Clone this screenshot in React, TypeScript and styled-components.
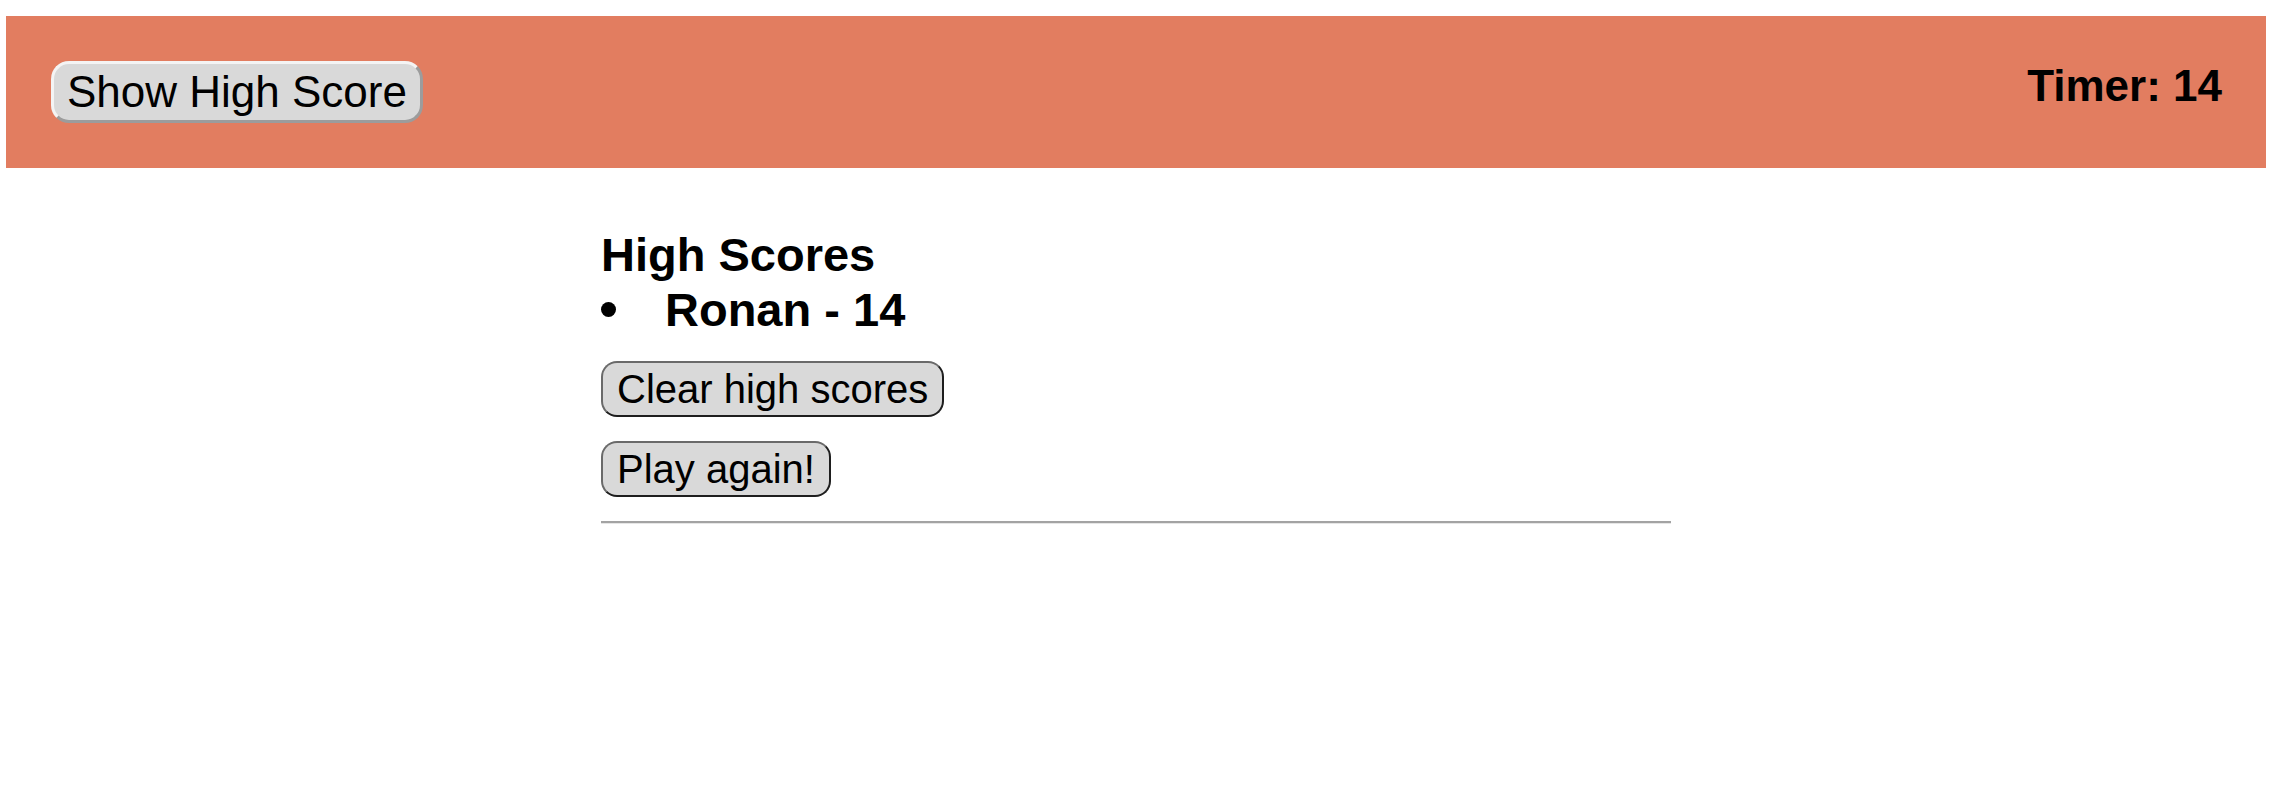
import React from 'react';
import styled, { createGlobalStyle } from 'styled-components';

const GlobalStyle = createGlobalStyle`
  html, body {
    margin: 0;
    padding: 0;
    background: #ffffff;
  }
  body {
    font-family: "Liberation Sans", Arial, sans-serif;
    color: #000000;
  }
`;

const Page = styled.div`
  padding: 16px 14px 0 6px;
`;

const Header = styled.header`
  height: 152px;
  background: #e27d60;
  display: flex;
  align-items: center;
  justify-content: space-between;
  padding: 0 44px 0 45px;
  box-sizing: border-box;
`;

const Timer = styled.h3`
  margin: 0 0 12px 0;
  font-size: 44px;
  font-weight: 700;
  line-height: normal;
`;

const Button = styled.button<{ $variant?: 'header' | 'plain' }>`
  font-family: "Liberation Sans", Arial, sans-serif;
  color: #000000;
  background: #d9d9d9;
  cursor: pointer;
  ${({ $variant }) =>
    $variant === 'header'
      ? `
    font-size: 44px;
    line-height: 50px;
    padding: 3px 13px;
    border-width: 3px;
    border-style: solid;
    border-color: #f4f4f4 #9c9c9c #9c9c9c #f4f4f4;
    border-radius: 18px;
  `
      : `
    align-self: flex-start;
    font-size: 40px;
    line-height: 46px;
    padding: 3px 14px;
    border-width: 2px;
    border-style: solid;
    border-color: #6a6a6a #1e1e1e #1e1e1e #6a6a6a;
    border-radius: 16px;
  `}
`;

const Main = styled.main`
  width: 1070px;
  margin: 59px auto 0;
  display: flex;
  flex-direction: column;
`;

const Title = styled.h2`
  margin: 0;
  font-size: 47px;
  font-weight: 700;
  line-height: normal;
`;

const ScoreList = styled.ul`
  margin: 0 0 24px 0;
  padding: 0;
  list-style: none;
`;

const ScoreItem = styled.li`
  display: flex;
  align-items: center;
  font-size: 47px;
  font-weight: 700;
  line-height: normal;
`;

const Bullet = styled.span`
  width: 15px;
  height: 15px;
  border-radius: 50%;
  background: #000000;
  margin-right: 49px;
  flex: none;
`;

const Actions = styled.div`
  display: flex;
  flex-direction: column;
  gap: 24px;
`;

const Divider = styled.hr`
  margin: 24px 0 0 0;
  height: 0;
  border: none;
  border-top: 2px solid #a3a3a3;
  border-bottom: 1px solid #e6e6e6;
`;

const scores = [{ name: 'Ronan', score: 14 }];

export default function App() {
  return (
    <Page>
      <GlobalStyle />
      <Header>
        <Button $variant="header">Show High Score</Button>
        <Timer>Timer: 14</Timer>
      </Header>
      <Main>
        <Title>High Scores</Title>
        <ScoreList>
          {scores.map((s) => (
            <ScoreItem key={s.name}>
              <Bullet />
              {s.name} - {s.score}
            </ScoreItem>
          ))}
        </ScoreList>
        <Actions>
          <Button>Clear high scores</Button>
          <Button>Play again!</Button>
        </Actions>
        <Divider />
      </Main>
    </Page>
  );
}
